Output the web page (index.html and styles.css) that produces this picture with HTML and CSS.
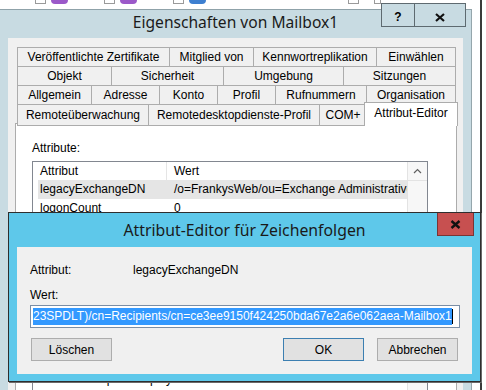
FILE: index.html
```html
<!DOCTYPE html>
<html lang="de">
<head>
    <meta charset="UTF-8">
    <meta name="viewport" content="width=device-width, initial-scale=1.0">
    <title>Attribut-Editor für Zeichenfolgen</title>
    <link rel="stylesheet" href="styles.css">
</head>
<body>
    <div class="desktop">
        <div class="taskstrip">
            <span class="doc"></span><span class="blob purple"></span>
            <span class="doc gap1"></span><span class="blob purple"></span>
            <span class="doc gap1"></span><span class="blob blue"></span>
            <span class="doc gap2"></span><span class="doc gap3"></span>
        </div>
        <div class="far-edge"></div>

        <div class="window props">
            <div class="titlebar">
                <span class="title">Eigenschaften von Mailbox1</span>
                <div class="caption">
                    <span class="cap-btn help">?</span>
                    <span class="cap-btn close">
                        <svg width="10" height="9" viewBox="0 0 10 9"><path d="M1 1 L9 8 M9 1 L1 8" stroke="#111" stroke-width="2.2" fill="none"/></svg>
                    </span>
                </div>
            </div>
            <div class="win-body">
                <div class="tabs">
                    <div class="tab-row row1">
                        <span class="tab">Veröffentlichte Zertifikate</span>
                        <span class="tab">Mitglied von</span>
                        <span class="tab">Kennwortreplikation</span>
                        <span class="tab">Einwählen</span>
                    </div>
                    <div class="tab-row row2">
                        <span class="tab">Objekt</span>
                        <span class="tab">Sicherheit</span>
                        <span class="tab">Umgebung</span>
                        <span class="tab">Sitzungen</span>
                    </div>
                    <div class="tab-row row3">
                        <span class="tab">Allgemein</span>
                        <span class="tab">Adresse</span>
                        <span class="tab">Konto</span>
                        <span class="tab">Profil</span>
                        <span class="tab">Rufnummern</span>
                        <span class="tab">Organisation</span>
                    </div>
                    <div class="tab-row row4">
                        <span class="tab">Remoteüberwachung</span>
                        <span class="tab">Remotedesktopdienste-Profil</span>
                        <span class="tab">COM+</span>
                        <span class="tab active">Attribut-Editor</span>
                    </div>
                </div>
                <div class="tab-panel">
                    <div class="panel-label">Attribute:</div>
                    <div class="listbox">
                        <div class="list-rows">
                            <div class="list-head"><span>Attribut</span><span>Wert</span></div>
                            <div class="list-row selected"><span>legacyExchangeDN</span><span>/o=FrankysWeb/ou=Exchange Administrative Group (FYDIBOHF23SPDLT)</span></div>
                            <div class="list-row"><span>logonCount</span><span>0</span></div>
                            <div class="list-row"><span>mail</span><span>mailbox1@frankysweb.de</span></div>
                            <div class="list-row"><span>mailNickname</span><span>Mailbox1</span></div>
                            <div class="list-row"><span>mDBUseDefaults</span><span>TRUE</span></div>
                            <div class="list-row"><span>msExchALObjectVersion</span><span>87</span></div>
                            <div class="list-row"><span>msExchHomeServerName</span><span>/o=FrankysWeb/ou=Exchange</span></div>
                            <div class="list-row"><span>msExchMailboxGuid</span><span>0x4a 0x7c 0x11</span></div>
                            <div class="list-row"><span>msExchPoliciesIncluded</span><span>{26491cfc-9e50}</span></div>
                            <div class="list-row"><span>msExchRBACPolicyLink</span><span>CN=Default Role</span></div>
                            <div class="list-row"><span>msExchRecipientDisplayType</span><span>1073741824</span></div>
                        </div>
                        <div class="scrollbar">
                            <span class="scroll-up">
                                <svg width="9" height="6" viewBox="0 0 9 6"><path d="M1 5 L4.5 1.5 L8 5" stroke="#606060" stroke-width="1.2" fill="none"/></svg>
                            </span>
                        </div>
                    </div>
                </div>
            </div>
        </div>

        <div class="window dialog">
            <div class="dlg-titlebar">
                <span class="dlg-title">Attribut-Editor für Zeichenfolgen</span>
                <span class="dlg-close">
                    <svg width="11" height="9" viewBox="0 0 11 9"><path d="M1.5 1 L9.5 8 M9.5 1 L1.5 8" stroke="#111" stroke-width="2.4" fill="none"/></svg>
                </span>
            </div>
            <div class="dlg-body">
                <div class="attr-line">
                    <span class="attr-key">Attribut:</span>
                    <span>legacyExchangeDN</span>
                </div>
                <div class="value-label">Wert:</div>
                <div class="value-box">
                    <span class="selection">23SPDLT)/cn=Recipients/cn=ce3ee9150f424250bda67e2a6e062aea-Mailbox1</span><span class="caret"></span>
                </div>
                <div class="buttons">
                    <button class="btn">Löschen</button>
                    <span class="spacer"></span>
                    <button class="btn default">OK</button>
                    <button class="btn">Abbrechen</button>
                </div>
            </div>
        </div>
    </div>
</body>
</html>
```

FILE: styles.css
```css
body {
    margin: 0;
    background: #fff;
    font-family: "Liberation Sans", Arial, sans-serif;
    font-size: 12px;
    color: #000;
}

.desktop {
    position: relative;
    width: 486px;
    height: 390px;
    overflow: hidden;
    background: #fff;
}

/* bits of the desktop behind the windows */
.taskstrip {
    display: flex;
    align-items: flex-start;
    height: 9px;
    padding-left: 35px;
    overflow: hidden;
}
.doc {
    width: 9px;
    height: 3px;
    border: 1px solid #9a9a9a;
    border-top: none;
    background: #fff;
}
.doc.gap1 {
    margin-left: 36px;
}
.doc.gap2 {
    margin-left: 142px;
}
.doc.gap3 {
    margin-left: 15px;
    width: 5px;
}
.blob {
    width: 17px;
    height: 4px;
    margin-left: 5px;
    border-radius: 0 0 6px 6px;
}
.purple {
    background: #9b59c9;
}
.blue {
    background: #3d7fd0;
}
.far-edge {
    position: absolute;
    left: 480px;
    top: 0;
    width: 2px;
    height: 390px;
    background: #3a3a3a;
}

.window {
    position: absolute;
}

/* ---- Eigenschaften von Mailbox1 ---- */
.props {
    left: 0;
    top: 9px;
    width: 471px;
    height: 420px;
    background: #c8dbe2;
    border-right: 1px solid #95a6ac;
    border-top: 1px solid #8fa2a9;
}
.titlebar {
    position: relative;
    height: 28px;
    display: flex;
    align-items: center;
    justify-content: center;
    padding-bottom: 4px;
    box-sizing: border-box;
}
.title {
    font-family: "Noto Sans", "Open Sans", sans-serif;
    font-size: 15.6px;
    color: #1b1b1b;
}
.caption {
    position: absolute;
    right: 5px;
    top: -7px;
    display: flex;
}
.cap-btn {
    display: flex;
    align-items: center;
    justify-content: center;
    height: 24px;
    padding-top: 4px;
    background: #c8dbe2;
    border: 1px solid #5e6a70;
    box-sizing: border-box;
    font-weight: bold;
    font-size: 12px;
}
.cap-btn.help {
    width: 34px;
}
.cap-btn.close {
    width: 51px;
    border-left: none;
}

.win-body {
    margin: 0 8px;
    height: 400px;
    background: #f0f0f0;
    padding: 9px 0 0 7px;
    box-sizing: border-box;
}
.tabs {
    margin-left: 2px;
}
.tab-row {
    display: grid;
    height: 20px;
    margin-top: -1px;
}
.tab-row:first-child {
    margin-top: 0;
}
.row1 {
    grid-template-columns: 152px 84px 123px 80px;
}
.row2 {
    grid-template-columns: 94px 112px 120px 113px;
}
.row3 {
    grid-template-columns: 74px 68px 58px 58px 91px 90px;
}
.row4 {
    grid-template-columns: 131px 171px 47px 92px;
}
.tab {
    display: flex;
    align-items: center;
    justify-content: center;
    background: #f0f0f0;
    border: 1px solid #acacac;
    border-right: none;
    white-space: nowrap;
    padding-bottom: 1px;
    box-sizing: border-box;
}
.tab:last-child {
    border-right: 1px solid #acacac;
}
.tab.active {
    position: relative;
    z-index: 1;
    background: #fff;
    border-bottom: none;
    margin-top: -2px;
    height: 24px;
    margin-left: -2px;
    padding-bottom: 3px;
}

.tab-panel {
    width: 442px;
    height: 320px;
    margin-top: -1px;
    background: #fff;
    border: 1px solid #acacac;
    box-sizing: border-box;
    padding: 16px 0 0 16px;
}
.panel-label {
    line-height: 16px;
}
.listbox {
    display: flex;
    width: 396px;
    height: 240px;
    margin-top: 5px;
    border: 1px solid #828790;
    box-sizing: border-box;
}
.list-rows {
    flex: 1;
    overflow: hidden;
}
.list-head {
    display: grid;
    grid-template-columns: 134px 1fr;
    height: 18px;
    line-height: 18px;
}
.list-head span {
    padding-left: 7px;
}
.list-head span:first-child {
    border-right: 1px solid #e5e5e5;
}
.list-row {
    display: grid;
    grid-template-columns: 134px 1fr;
    height: 19px;
    line-height: 19px;
    margin-left: 5px;
    white-space: nowrap;
}
.list-row span {
    padding-left: 2px;
    overflow: hidden;
}
.list-row.selected {
    background: #e5e5e5;
}
.scrollbar {
    width: 19px;
    background: #f7f7f7;
    border-left: 1px solid #e3e3e3;
}
.scroll-up {
    display: flex;
    align-items: center;
    justify-content: center;
    height: 18px;
    border-bottom: 1px solid #e3e3e3;
}

/* ---- Attribut-Editor für Zeichenfolgen ---- */
.dialog {
    left: 8px;
    top: 212px;
    width: 471px;
    height: 168px;
    background: #5ec8ea;
    border: 1px solid #2e2e2e;
    box-shadow: 1px 1px 0 #6a6a6a;
}
.dlg-titlebar {
    position: relative;
    height: 34px;
    display: flex;
    align-items: center;
    justify-content: center;
}
.dlg-title {
    font-family: "Noto Sans", "Open Sans", sans-serif;
    font-size: 15.8px;
    color: #1a1a1a;
}
.dlg-close {
    position: absolute;
    right: 6px;
    top: 0;
    width: 37px;
    height: 23px;
    display: flex;
    align-items: center;
    justify-content: center;
    background: #c75050;
    border: 1px solid #7a3434;
    border-top: none;
    box-sizing: border-box;
}
.dlg-body {
    margin: 0 8px;
    height: 127px;
    background: #f0f0f0;
    padding: 15px 14px 0 13px;
    box-sizing: border-box;
}
.attr-line {
    display: flex;
    line-height: 16px;
}
.attr-key {
    width: 103px;
}
.value-label {
    margin-top: 9px;
    line-height: 16px;
}
.value-box {
    display: flex;
    align-items: center;
    width: 430px;
    height: 23px;
    margin-top: 2px;
    padding: 0 2px;
    background: #fff;
    border: 1px solid #7a8ea6;
    box-sizing: border-box;
    overflow: hidden;
    white-space: nowrap;
}
.selection {
    background: #3399ff;
    color: #fff;
    line-height: 17px;
}
.caret {
    width: 1px;
    height: 15px;
    background: #000;
}
.buttons {
    display: flex;
    gap: 13px;
    margin-top: 10px;
    margin-left: 1px;
}
.spacer {
    flex: 1;
}
.btn {
    width: 81px;
    height: 23px;
    background: #e1e1e1;
    border: 1px solid #adadad;
    font-family: inherit;
    font-size: 12px;
    color: #000;
    padding: 0;
}
.btn.default {
    border-color: #3c7fb1;
}
```
